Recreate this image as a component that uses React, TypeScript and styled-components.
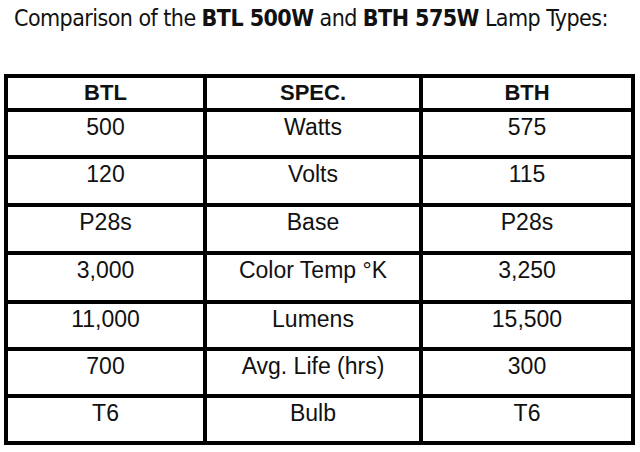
import React from "react";
import styled, { createGlobalStyle } from "styled-components";

const rows: [string, string, string][] = [
  ["500", "Watts", "575"],
  ["120", "Volts", "115"],
  ["P28s", "Base", "P28s"],
  ["3,000", "Color Temp °K", "3,250"],
  ["11,000", "Lumens", "15,500"],
  ["700", "Avg. Life (hrs)", "300"],
  ["T6", "Bulb", "T6"],
];

const rowHeights = [43, 44, 44, 45, 43, 43, 43];

const App = () => {
  return (
    <Page>
      <GlobalStyle />
      <Title>
        Comparison of the <b>BTL 500W</b> and <b>BTH 575W</b> Lamp Types:
      </Title>
      <Table $rows={rowHeights}>
        <HeadCell>BTL</HeadCell>
        <HeadCell>SPEC.</HeadCell>
        <HeadCell>BTH</HeadCell>
        {rows.map((row, i) =>
          row.map((value, j) => <Cell key={`${i}-${j}`}>{value}</Cell>)
        )}
      </Table>
    </Page>
  );
};

const GlobalStyle = createGlobalStyle`
  html, body {
    margin: 0;
    padding: 0;
    background: #ffffff;
  }
`;

const Page = styled.div`
  width: 640px;
  height: 452px;
  background: #ffffff;
  color: #111111;
  overflow: hidden;
`;

const Title = styled.h1`
  margin: 0;
  padding: 5px 0 0 14px;
  height: 68px;
  box-sizing: border-box;
  font-family: "DejaVu Sans Condensed", "DejaVu Sans", sans-serif;
  font-size: 23px;
  font-weight: 400;
  line-height: 26px;
  letter-spacing: -0.55px;
  white-space: nowrap;

  b {
    font-weight: 700;
  }
`;

const Table = styled.div<{ $rows: number[] }>`
  margin: 6px 0 0 4px;
  width: 631px;
  box-sizing: border-box;
  display: grid;
  grid-template-columns: 195px 212px 208px;
  grid-template-rows: 30px ${({ $rows }) => $rows.map((h) => `${h}px`).join(" ")};
  gap: 4px;
  padding: 4px;
  background: #000000;
`;

const HeadCell = styled.div`
  background: #ffffff;
  display: flex;
  align-items: center;
  justify-content: center;
  font-family: "Liberation Sans", Arial, sans-serif;
  font-size: 22px;
  font-weight: 700;
`;

const Cell = styled.div`
  background: #ffffff;
  text-align: center;
  padding-top: 2px;
  font-family: "Liberation Sans", Arial, sans-serif;
  font-size: 23px;
  line-height: 26px;
`;

export default App;
